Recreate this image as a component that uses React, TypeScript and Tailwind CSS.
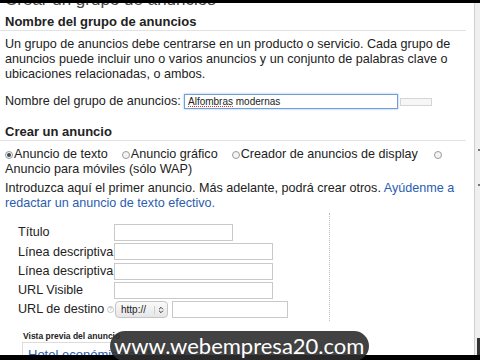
import { ChevronsUpDown } from 'lucide-react'

function Radio({ checked = false }: { checked?: boolean }) {
  return (
    <span className="inline-flex items-center justify-center w-[8px] h-[8px] rounded-full border border-[#9a9a9a] bg-[#f4f4f4] mr-[1px] align-middle">
      {checked && <span className="w-[4px] h-[4px] rounded-full bg-[#3c4a5c]" />}
    </span>
  )
}

function Field({ label, width }: { label: string; width: string }) {
  return (
    <div className="flex items-center h-[19.3px]">
      <div className="w-[114px] pl-[18px] overflow-hidden whitespace-nowrap">{label}</div>
      <div className={`h-[17px] border border-[#c9c9c9] bg-white ${width}`} />
    </div>
  )
}

export default function App() {
  return (
    <div className="relative w-[480px] h-[360px] overflow-hidden bg-white text-[#222] font-['Liberation_Sans',Arial,sans-serif] text-[12.6px]">
      <div className="flex h-full">
        <main className="w-[474px]">
          {/* page title, cut off at the top */}
          <div className="h-[8px] overflow-hidden">
            <div className="mt-[-10px] pl-[5px] text-[17px] leading-[20px] text-[#444]">Crear un grupo de anuncios</div>
          </div>

          {/* Nombre del grupo */}
          <div className="w-[466px] pt-[6px] pl-[5px] leading-[16px] text-[13px] font-bold border-b border-[#e2e2e2]">
            Nombre del grupo de anuncios
          </div>
          <p className="mt-[6px] pl-[5px] leading-[15px]">
            Un grupo de anuncios debe centrarse en un producto o servicio. Cada grupo de
            <br />
            anuncios puede incluir uno o varios anuncios y un conjunto de palabras clave o
            <br />
            ubicaciones relacionadas, o ambos.
          </p>
          <div className="mt-[12px] flex items-center h-[15px] pl-[5px]">
            <span className="w-[179px]">Nombre del grupo de anuncios:</span>
            <div className="w-[214px] h-[15px] border border-[#6f9fd6] shadow-[0_0_2px_#8fb8e8] pl-[3px] text-[10px] leading-[13px]">
              <span className="underline decoration-dotted decoration-[#d33]">Alfombras</span> modernas
            </div>
            <div className="ml-[2px] w-[32px] h-[8px] border border-[#d6d6d6] bg-[#f6f6f6]" />
          </div>

          {/* Crear un anuncio */}
          <div className="mt-[15px] w-[466px] pl-[5px] leading-[16px] text-[13px] font-bold border-b border-[#e2e2e2]">
            Crear un anuncio
          </div>
          <div className="mt-[6px] pl-[5px] leading-[15px]">
            <div className="flex items-center whitespace-nowrap">
              <Radio checked />
              <span>Anuncio de texto</span>
              <span className="ml-[14px]"><Radio /></span>
              <span>Anuncio gráfico</span>
              <span className="ml-[14px]"><Radio /></span>
              <span>Creador de anuncios de display</span>
              <span className="ml-[16px]"><Radio /></span>
            </div>
            <div>Anuncio para móviles (sólo WAP)</div>
          </div>
          <p className="mt-[4px] pl-[5px] leading-[15px]">
            Introduzca aquí el primer anuncio. Más adelante, podrá crear otros.{' '}
            <span className="text-[#2a5db0]">Ayúdenme a</span>
            <br />
            <span className="text-[#2a5db0]">redactar un anuncio de texto efectivo.</span>
          </p>

          {/* ad form */}
          <div className="mt-[2px] w-[330px] h-[108px] border-r border-dotted border-[#bdbdbd] pt-[10px]">
            <Field label="Título" width="w-[119px]" />
            <Field label="Línea descriptiva" width="w-[159px]" />
            <Field label="Línea descriptiva 2" width="w-[159px]" />
            <Field label="URL Visible" width="w-[159px]" />
            <div className="flex items-center h-[19px]">
              <div className="w-[115px] pl-[18px] flex items-center whitespace-nowrap">
                <span>URL de destino</span>
                <span className="ml-auto mr-[1px] w-[7px] h-[7px] rounded-full border border-[#c4c4c4] text-[5px] leading-[5px] text-center text-[#aaa]">?</span>
              </div>
              <div className="flex items-center justify-between w-[53px] h-[17px] rounded-[4px] border border-[#c4c4c4] bg-gradient-to-b from-[#fafafa] to-[#e6e6e6] pl-[5px] pr-[2px] text-[10px]">
                <span>http://</span>
                <span className="border-l border-[#cfcfcf] pl-[2px] flex items-center">
                  <ChevronsUpDown className="w-[8px] h-[8px] text-[#333]" strokeWidth={3} />
                </span>
              </div>
              <div className="ml-[4px] w-[116px] h-[17px] border border-[#c9c9c9]" />
            </div>
          </div>

          {/* preview */}
          <div className="mt-[9px] pl-[23px] text-[8.5px] font-bold leading-[12px]">Vista previa del anuncio</div>
          <div className="ml-[22px] w-[300px] h-[30px] border border-[#dcdcdc] pl-[5px] pt-[2px] text-[13px] text-[#2a5db0] underline">
            Hotel económico en Madrid
          </div>
        </main>

        {/* scrollbar strip */}
        <div className="relative w-[6px] border-l border-[#cfcfcf] bg-[#efefef]">
          <span className="absolute left-[3px] top-[149px] w-[2px] h-[2px] bg-[#777]" />
          <span className="absolute left-[3px] top-[184px] w-[2px] h-[2px] bg-[#777]" />
          <span className="absolute left-[2px] top-[338px] w-[3px] h-[18px] bg-[#333]" />
        </div>
      </div>

      {/* letterbox bars */}
      <div className="absolute left-0 top-0 w-full h-[3px] bg-black" />
      <div className="absolute left-0 bottom-0 w-full h-[5px] bg-black" />

      {/* watermark */}
      <div className="absolute left-[110px] top-[331px] w-[259px] h-[30px] rounded-[15px] bg-[#2d2d2d]/90 flex items-center pl-[4px] text-white text-[22px] font-['Lato',sans-serif] leading-none">
        www.webempresa20.com
      </div>
    </div>
  )
}
